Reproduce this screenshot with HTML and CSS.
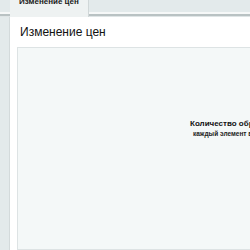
FILE: index.html
```html
<!DOCTYPE html>
<html lang="ru">
<head>
  <meta charset="UTF-8">
  <title>Изменение цен</title>
  <link rel="stylesheet" href="styles.css">
</head>
<body>

  <div class="tabs">
    <div class="tab">Изменение цен</div>
  </div>

  <div class="page">
    <h1 class="title">Изменение цен</h1>

    <div class="panel">
      <div class="info">
        <p class="info-main">Количество обработанных элементов</p>
        <p class="info-sub">каждый элемент включает в себя цены</p>
      </div>
    </div>
  </div>

</body>
</html>
```
FILE: styles.css
```css
html, body {
  height: 100%;
}

body {
  margin: 0;
  font-family: "Liberation Sans", Arial, sans-serif;
  background-color: #e3eaeb;
  overflow: hidden;
  display: flex;
  flex-direction: column;
}

.tabs {
  display: flex;
  height: 17px;
  padding-left: 10px;
  background: linear-gradient(to bottom, #e3eaeb 0 12px, #f6f8f8 12px 14px, #b9c2c3 14px 16px, #dfe5e6 16px 17px);
  flex-shrink: 0;
}

.tab {
  background: #eef2f2;
  border-right: 1px solid #d0d7d8;
  padding: 0 9px;
  height: 17px;
  font-size: 8px;
  font-weight: bold;
  line-height: 8px;
  color: #1a1a1a;
  margin-top: -2px;
  height: 19px;
}

.page {
  flex: 1;
  margin-left: 9px;
  background: #fff;
  border-left: 1px solid #d3dadb;
  padding: 8px 0 0 7px;
  display: flex;
  flex-direction: column;
}

.title {
  margin: 0 0 8px 3px;
  font-size: 12px;
  font-weight: normal;
  color: #111;
  line-height: 14px;
}

.panel {
  flex: 1;
  background: #f4f8f8;
  border: 1px solid #dde3e4;
  border-right: none;
  padding: 71px 0 0 172px;
  overflow: hidden;
}

.info {
  white-space: nowrap;
}

.info-main {
  margin: 0;
  font-size: 8px;
  line-height: 10px;
  font-weight: bold;
  color: #111;
}

.info-sub {
  margin: 0 0 0 3px;
  font-size: 6.5px;
  line-height: 9px;
  font-weight: bold;
  color: #222;
}
```
